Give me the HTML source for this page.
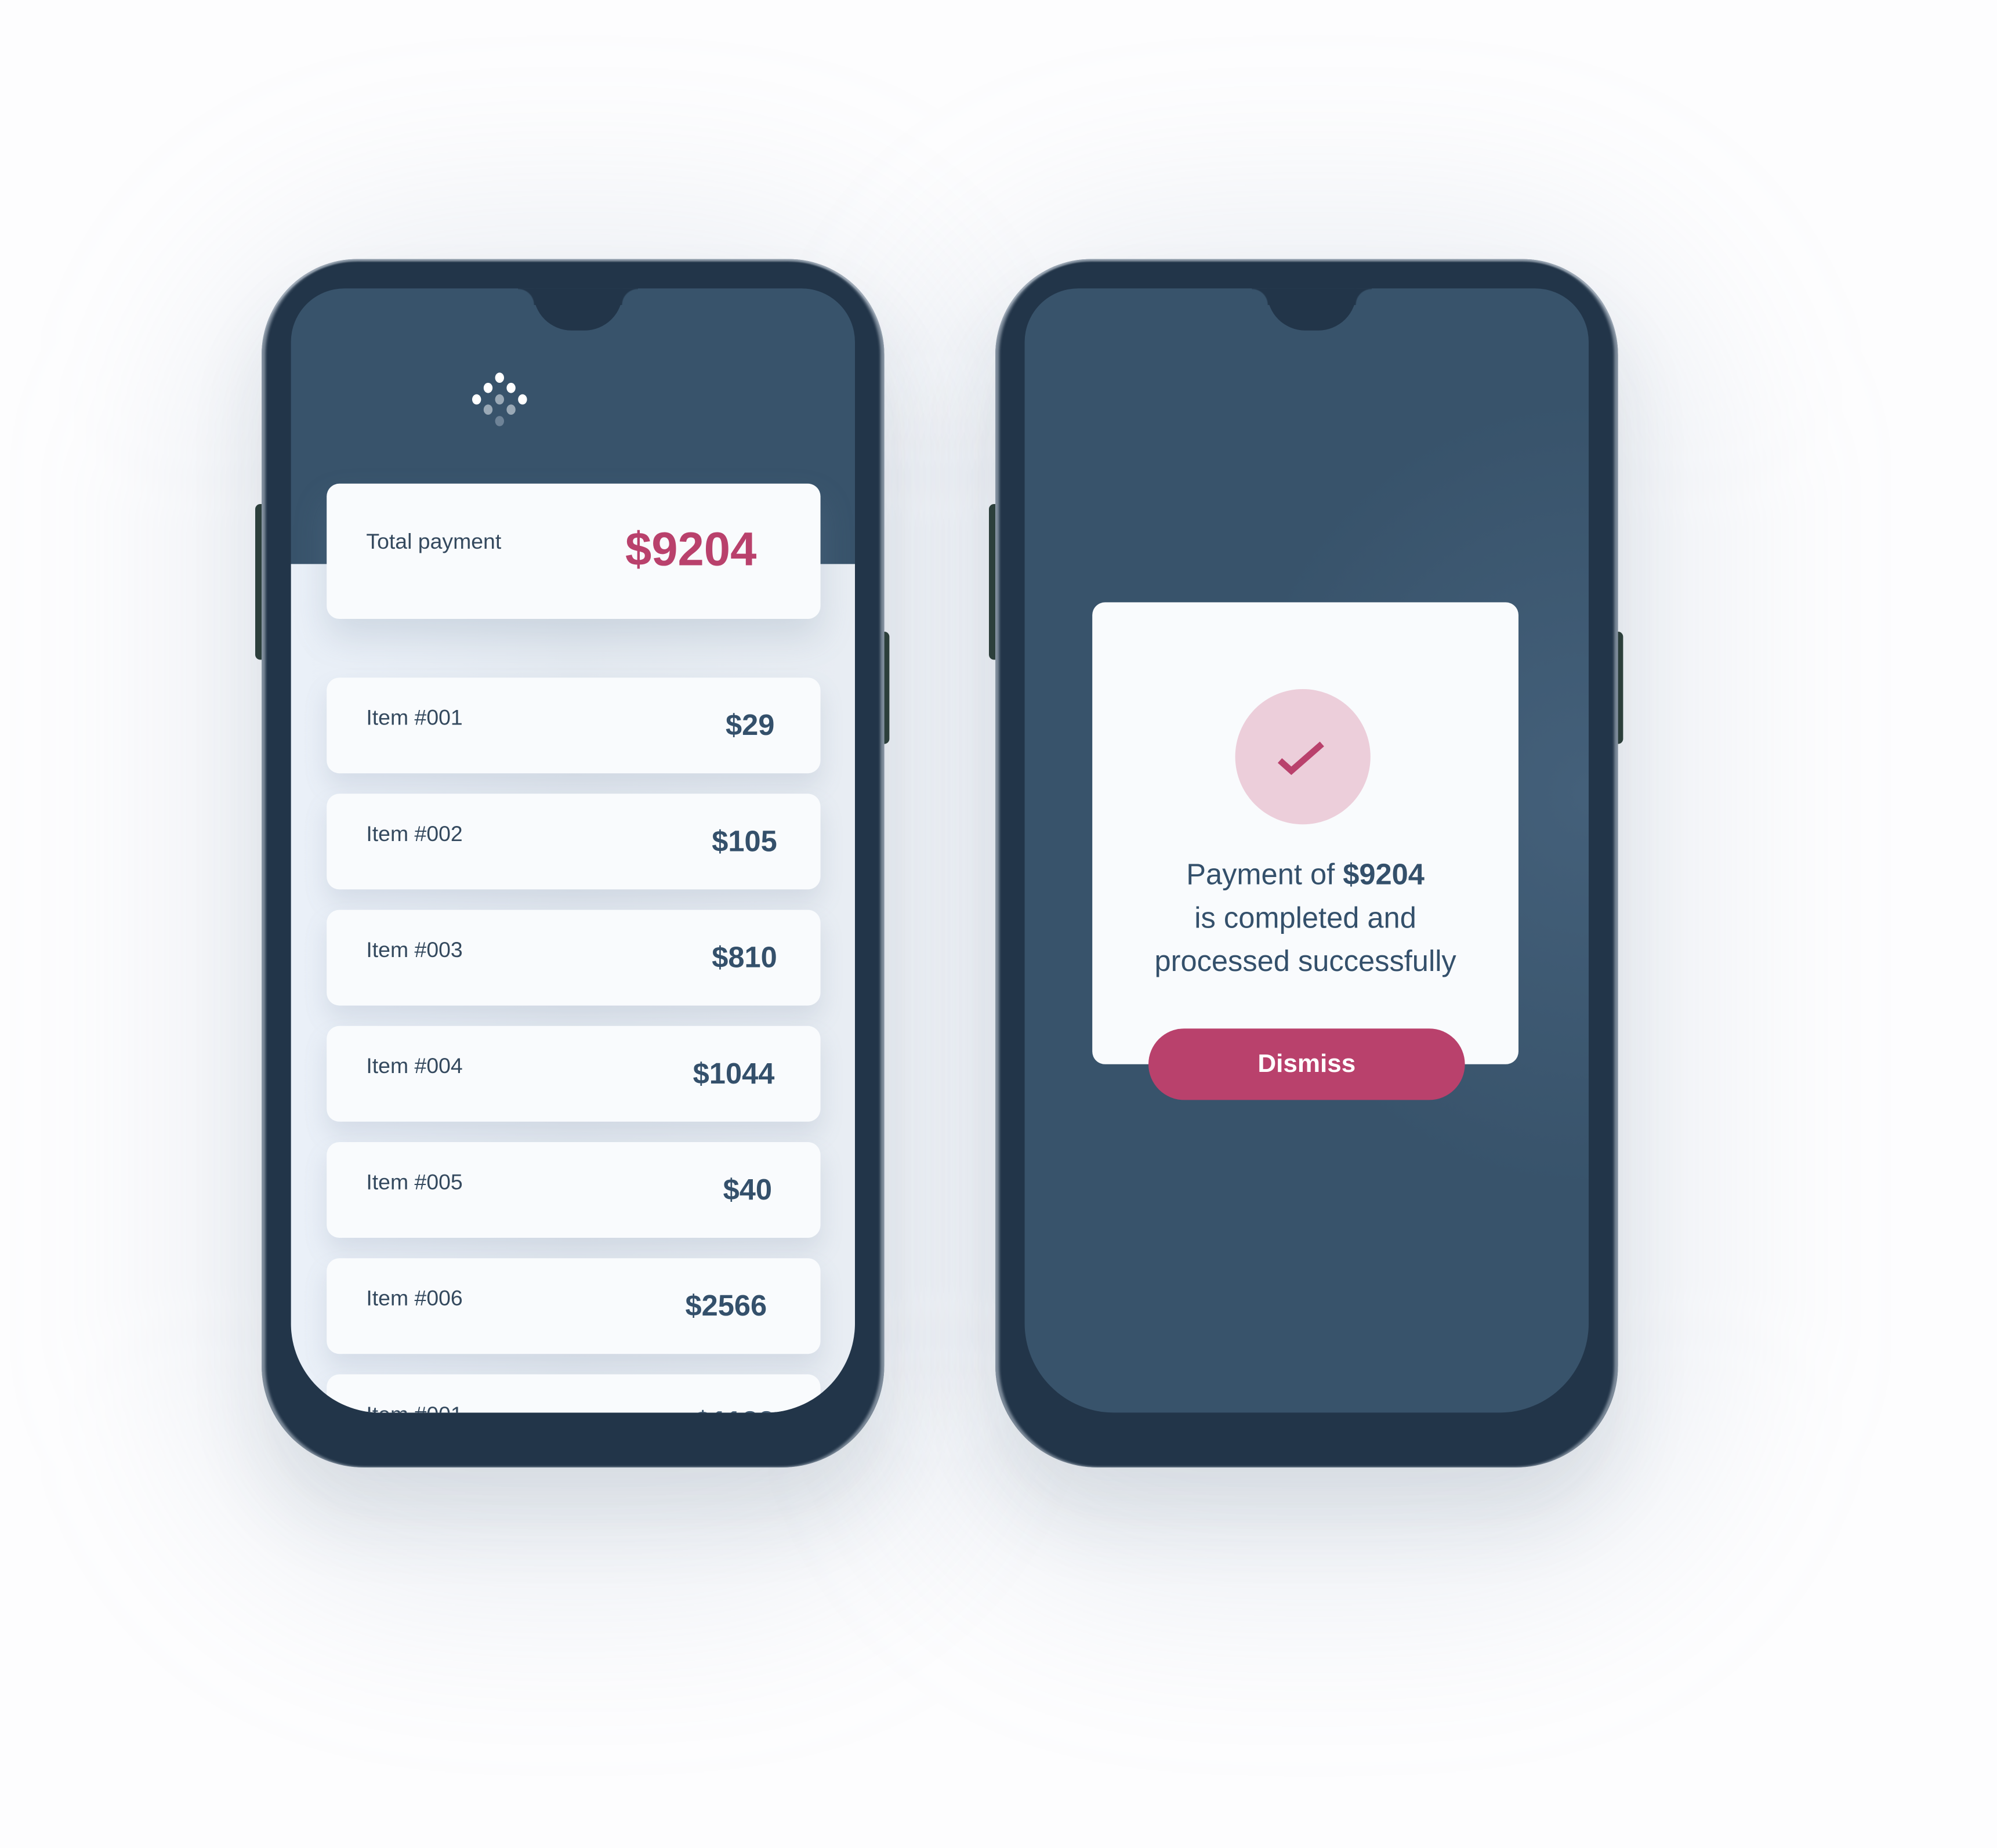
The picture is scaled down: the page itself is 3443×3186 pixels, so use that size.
<!DOCTYPE html>
<html><head><meta charset="utf-8">
<style>
html,body{margin:0;padding:0;}
body{width:3443px;height:3184px;overflow:hidden;background:#fdfdfe;font-family:"Liberation Sans",Arial,sans-serif;}
#s{position:absolute;left:0;top:0;width:1566px;height:1448px;transform:scale(2.2);transform-origin:0 0;}
.glow{position:absolute;border-radius:200px;background:rgba(150,170,190,0.16);filter:blur(70px);}
.phone{position:absolute;top:203px;width:488px;height:947px;border-radius:75px 75px 80px 80px;background:#223549;box-shadow:inset 3px 0 2px rgba(200,210,220,.55),inset -3px 0 2px rgba(200,210,220,.55),inset 0 2px 1px rgba(200,210,220,.5),0 40px 80px rgba(60,80,100,.12);}
.btn{position:absolute;width:9px;background:#2c3f3a;border-radius:4px;}
.screen{position:absolute;left:23px;top:23px;width:442px;height:881px;border-radius:42px 42px 70px 70px;overflow:hidden;background:#38536b;}
.notch{position:absolute;left:190px;top:-1px;width:70px;height:34px;background:#223549;border-radius:0 0 30px 30px;}
.notch:before,.notch:after{content:"";position:absolute;top:0;width:14px;height:14px;}
.notch:before{left:-12px;background:radial-gradient(circle at 0 100%,transparent 12px,#223549 13px);}
.notch:after{right:-12px;background:radial-gradient(circle at 100% 100%,transparent 12px,#223549 13px);}
.list{position:absolute;left:0;top:216px;width:442px;height:700px;background:linear-gradient(90deg,#eaf0f8,#e3e9f0 50%,#e8edf3);}
.card{position:absolute;left:28px;width:387px;background:#f9fbfd;border-radius:10px;box-shadow:0 10px 18px rgba(120,140,165,.18);}
.item{height:75px;}
.lbl{position:absolute;left:31px;top:22px;font-size:17px;color:#34495e;}
.pr{position:absolute;right:36px;top:24px;font-size:23px;font-weight:bold;color:#34506b;}
.dot{position:absolute;width:7px;height:8px;border-radius:50%;background:#fff;}
</style></head><body>
<div id="s">
<div class="glow" style="left:150px;top:170px;width:600px;height:1080px;"></div>
<div class="glow" style="left:720px;top:170px;width:620px;height:1080px;"></div>

<!-- LEFT PHONE -->
<div class="btn" style="left:200px;top:395px;height:122px;"></div>
<div class="btn" style="left:688px;top:495px;height:88px;"></div>
<div class="phone" style="left:205px;">
 <div class="screen">
  <div class="list"></div>
  <div class="notch"></div>
  <div class="dot" style="left:160px;top:66px;"></div>
  <div class="dot" style="left:151px;top:74px;"></div>
  <div class="dot" style="left:169px;top:74px;"></div>
  <div class="dot" style="left:142px;top:83px;"></div>
  <div class="dot" style="left:160px;top:83px;background:#9aa9b6;"></div>
  <div class="dot" style="left:178px;top:83px;"></div>
  <div class="dot" style="left:151px;top:91px;background:#9aa9b6;"></div>
  <div class="dot" style="left:169px;top:91px;background:#9aa9b6;"></div>
  <div class="dot" style="left:160px;top:100px;background:#6e8397;"></div>
  <div class="card" style="top:153px;height:106px;box-shadow:0 14px 26px rgba(120,140,165,.22);">
   <div style="position:absolute;left:31px;top:36px;font-size:17px;color:#34495e;">Total payment</div>
   <div style="position:absolute;left:234px;top:31px;font-size:37px;font-weight:bold;color:#b9416c;">$9204</div>
  </div>
  <div class="card item" style="top:305px;"><div class="lbl">Item #001</div><div class="pr">$29</div></div>
  <div class="card item" style="top:396px;"><div class="lbl">Item #002</div><div class="pr" style="right:34px">$105</div></div>
  <div class="card item" style="top:487px;"><div class="lbl">Item #003</div><div class="pr" style="right:34px">$810</div></div>
  <div class="card item" style="top:578px;"><div class="lbl">Item #004</div><div class="pr">$1044</div></div>
  <div class="card item" style="top:669px;"><div class="lbl">Item #005</div><div class="pr" style="right:38px">$40</div></div>
  <div class="card item" style="top:760px;"><div class="lbl">Item #006</div><div class="pr" style="right:42px">$2566</div></div>
  <div class="card item" style="top:851px;"><div class="lbl">Item #001</div><div class="pr">$1132</div></div>
 </div>
</div>

<!-- RIGHT PHONE -->
<div class="btn" style="left:775px;top:395px;height:122px;"></div>
<div class="btn" style="left:1263px;top:495px;height:88px;"></div>
<div class="phone" style="left:780px;">
 <div class="screen" style="background:radial-gradient(ellipse at 100% 45%,#44607a 0%,#38536b 45%);">
  <div class="notch"></div>
  <div style="position:absolute;left:53px;top:246px;width:334px;height:362px;background:#f9fbfd;border-radius:10px;">
   <div style="position:absolute;left:112px;top:68px;width:106px;height:106px;border-radius:50%;background:#ecceda;"></div>
   <svg style="position:absolute;left:143px;top:102px;" width="42" height="36" viewBox="0 0 42 36"><path d="M4 22 L13 30 L37 9" fill="none" stroke="#b9416c" stroke-width="5"/></svg>
   <div style="position:absolute;left:0;width:334px;top:196px;text-align:center;font-size:23px;line-height:34px;color:#34506b;">Payment of <b>$9204</b><br>is completed and<br>processed successfully</div>
  </div>
  <div style="position:absolute;left:97px;top:580px;width:248px;height:56px;border-radius:28px;background:#b9416c;color:#fff;font-weight:bold;font-size:20px;line-height:56px;text-align:center;">Dismiss</div>
 </div>
</div>
</div>
</body></html>
